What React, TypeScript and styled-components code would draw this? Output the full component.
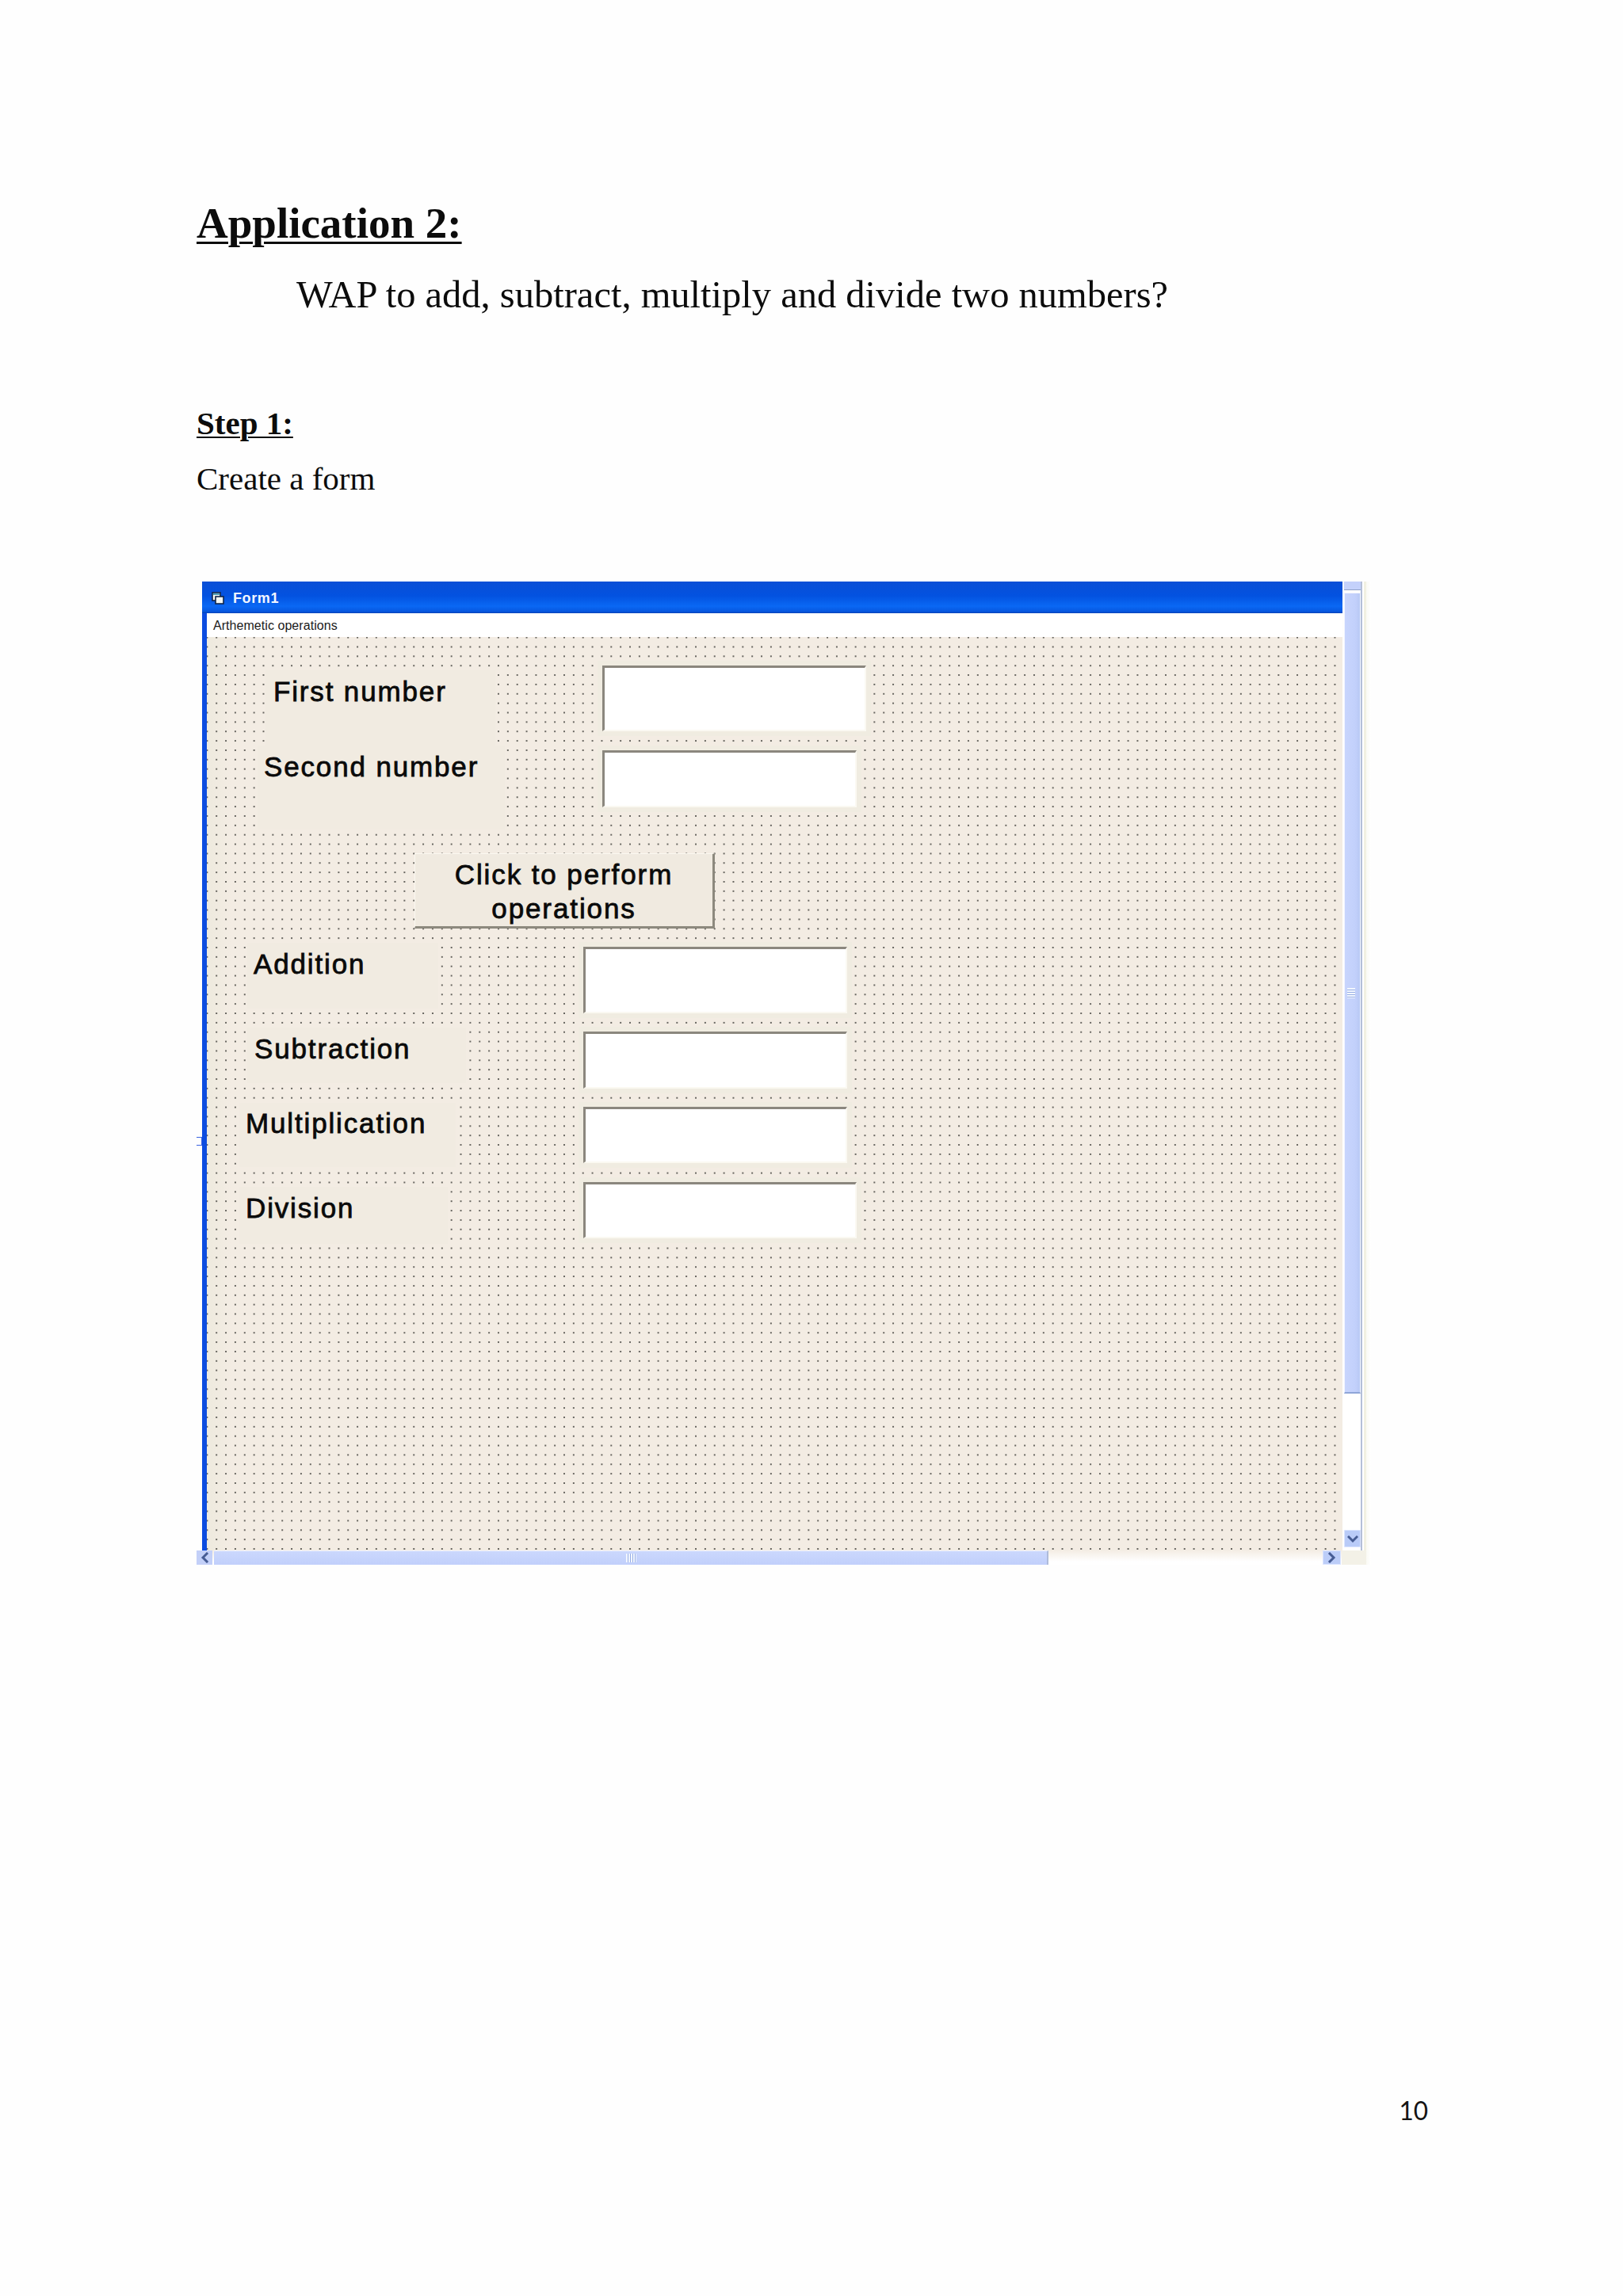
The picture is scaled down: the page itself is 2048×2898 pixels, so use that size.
import React from "react";
import styled, { createGlobalStyle } from "styled-components";

const Global = createGlobalStyle`
  html, body { margin: 0; padding: 0; background: #fff; }
`;

const Page = styled.div`
  position: relative;
  box-sizing: border-box;
  width: 2048px;
  height: 2898px;
  padding: 251px 0 0 248px;
  display: flex;
  flex-direction: column;
  background: #fefefe;
  color: #0c0c0c;
  font-family: "Liberation Serif", serif;
`;

const Title = styled.div`
  font-size: 55px;
  line-height: 62px;
  font-weight: 700;
  white-space: nowrap;
  text-decoration: underline;
  text-decoration-thickness: 3px;
  text-underline-offset: 5px;
`;

const Question = styled.div`
  margin: 31px 0 0 126px;
  font-size: 48.5px;
  line-height: 56px;
  white-space: nowrap;
`;

const StepHeading = styled.div`
  margin-top: 110px;
  font-size: 41px;
  line-height: 48px;
  font-weight: 700;
  white-space: nowrap;
  text-decoration: underline;
  text-decoration-thickness: 2px;
  text-underline-offset: 3px;
`;

const StepText = styled.div`
  margin-top: 22px;
  font-size: 41px;
  line-height: 48px;
  white-space: nowrap;
`;

const Frame = styled.div`
  margin-top: 106px;
  width: 1482px;
  height: 1241px;
  display: grid;
  grid-template-columns: 1448px 34px;
  grid-template-rows: 1223px 18px;
  font-family: "Liberation Sans", Arial, sans-serif;
`;

const Window = styled.div`
  position: relative;
  margin: 0 2px 0 7px;
  display: flex;
  flex-direction: column;
  min-height: 0;
`;

const Ruler = styled.div`
  position: absolute;
  left: -7px;
  top: 701px;
  width: 6px;
  height: 9px;
  border: 1px solid #3a62e0;
  border-left: 0;
`;

const TitleBar = styled.div`
  height: 40px;
  flex: none;
  box-sizing: border-box;
  padding: 2px 0 0 12px;
  display: flex;
  align-items: center;
  gap: 11px;
  background: linear-gradient(180deg, #0a4fd6 0%, #0352e0 45%, #0a68f4 78%, #0758e0 94%, #0342b8 100%);
`;

const FormIcon = styled.svg`
  width: 16px;
  height: 16px;
  flex: none;
`;

const TitleText = styled.span`
  color: #f2f6ff;
  font-size: 18px;
  font-weight: 700;
  line-height: 20px;
  letter-spacing: 0.6px;
`;

const Body = styled.div`
  flex: 1;
  display: flex;
  flex-direction: column;
  min-height: 0;
  border-left: 6px solid #0c4ce0;
`;

const MenuBar = styled.div`
  height: 30px;
  flex: none;
  box-sizing: border-box;
  padding: 6px 0 0 8px;
  background: #fff;
  color: #1a1a1a;
  font-size: 16px;
  line-height: 20px;
  letter-spacing: 0.05px;
`;

const Canvas = styled.div`
  position: relative;
  flex: 1;
  background-color: #f3ece3;
  background-image:
    radial-gradient(circle at center, #2a2a26 0, #2a2a26 0.5px, rgba(42, 42, 38, 0) 1.15px),
    linear-gradient(90deg, #eeeade 0, #f3ece3 30px, #f3ece3 100%);
  background-size: 11.87px 11.86px, 100% 100%;
  background-position: -5.6px -5.3px, 0 0;
  background-repeat: repeat, no-repeat;
`;

const Label = styled.div<{ $x: number; $y: number; $w: number; $h: number; $pl: number; $pt: number }>`
  position: absolute;
  left: ${(p) => p.$x}px;
  top: ${(p) => p.$y}px;
  width: ${(p) => p.$w}px;
  height: ${(p) => p.$h}px;
  box-sizing: border-box;
  padding: ${(p) => p.$pt}px 0 0 ${(p) => p.$pl}px;
  background: #f1ebe1;
  color: #0a0a0a;
  font-size: 35px;
  line-height: 34px;
  letter-spacing: 1.85px;
  white-space: nowrap;
  -webkit-text-stroke: 0.8px #0a0a0a;
`;

const TextBox = styled.div<{ $x: number; $y: number; $w: number; $h: number }>`
  position: absolute;
  left: ${(p) => p.$x}px;
  top: ${(p) => p.$y}px;
  width: ${(p) => p.$w}px;
  height: ${(p) => p.$h}px;
  box-sizing: border-box;
  background: #fff;
  border-style: solid;
  border-width: 3px 2px 2px 3px;
  border-color: #8b877e #fbf9f2 #fbf9f2 #8b877e;
  box-shadow: 0 0 0 6px #f0ece1;
`;

const PerformButton = styled.div`
  position: absolute;
  left: 262px;
  top: 273px;
  width: 379px;
  height: 95px;
  box-sizing: border-box;
  padding-top: 4px;
  background: #f0eae0;
  border-style: solid;
  border-width: 1px 3px 3px 1px;
  border-color: #fbf8f0 #8d897e #8d897e #fbf8f0;
  color: #0a0a0a;
  text-align: center;
  font-size: 35px;
  line-height: 43px;
  letter-spacing: 1.9px;
  -webkit-text-stroke: 0.8px #0a0a0a;
`;

const VerticalBar = styled.div`
  display: flex;
  min-height: 0;
  background: linear-gradient(90deg, #fff 0, #fff 25px, #f1f0e2 25px, #f1f0e2 28px, #fafaf4 28px, #fff 34px);
`;

const VerticalTrack = styled.div`
  width: 21px;
  display: flex;
  flex-direction: column;
  align-items: stretch;
  border-right: 2px solid #b4bfd8;
`;

const TopCap = styled.div`
  height: 10px;
  flex: none;
  background: #c4d1fb;
  border-bottom: 1px solid #8fa0c8;
`;

const VerticalThumb = styled.div`
  position: relative;
  margin-top: 3px;
  height: 1011px;
  flex: none;
  box-sizing: border-box;
  border: 1px solid #f2f5ff;
  border-bottom: 2px solid #8fa6d8;
  background: linear-gradient(90deg, #c8d5fd 0, #c2d0fb 70%, #b8c8f4 100%);
`;

const VerticalGrip = styled.div`
  position: absolute;
  left: 3px;
  top: 498px;
  width: 10px;
  height: 13px;
  background: repeating-linear-gradient(180deg, #f2f6ff 0, #f2f6ff 2px, #97aee4 2px, #97aee4 3px);
`;

const Spring = styled.div`
  flex: 1;
`;

const DownButton = styled.div`
  margin-bottom: 4px;
  height: 22px;
  flex: none;
  display: flex;
  align-items: center;
  justify-content: center;
  border-radius: 2px;
  background: #b9cbf8;
  box-shadow: inset 0 0 0 1px #dbe5ff;
`;

const HorizontalBar = styled.div`
  display: flex;
  background: linear-gradient(180deg, #f4ede4 0, #fff 14px);
`;

const LeftButton = styled.div`
  width: 20px;
  margin-right: 2px;
  flex: none;
  display: flex;
  align-items: center;
  justify-content: center;
  background: #c3d0f8;
`;

const HorizontalThumb = styled.div`
  position: relative;
  width: 1053px;
  flex: none;
  box-sizing: border-box;
  border-top: 1px solid #eef2ff;
  border-right: 2px solid #aebbda;
  background: linear-gradient(180deg, #cbd8fd 0, #c1cffb 100%);
`;

const HorizontalGrip = styled.div`
  position: absolute;
  left: 520px;
  top: 3px;
  width: 13px;
  height: 11px;
  background: repeating-linear-gradient(90deg, #f2f6ff 0, #f2f6ff 2px, #97aee4 2px, #97aee4 3px);
`;

const RightButton = styled.div`
  margin-left: 346px;
  width: 23px;
  flex: none;
  display: flex;
  align-items: center;
  justify-content: center;
  background: #bccdf8;
  box-shadow: inset 0 0 0 1px #dbe5ff;
`;

const RestCorner = styled.div`
  flex: 1;
  margin-left: 1px;
  background: #f3f1e7;
`;

const Corner = styled.div`
  background: linear-gradient(90deg, #f3f1e7 0, #f3f1e7 28px, #fafaf4 28px, #fff 34px);
`;

const PageNumber = styled.div`
  position: absolute;
  right: 246px;
  top: 2645px;
  font-family: Lato, "Liberation Sans", sans-serif;
  font-size: 31.5px;
  line-height: 36px;
  color: #141414;
  transform: scaleY(1.06);
`;

const Chevron: React.FC<{ d: string; w: number; h: number }> = ({ d, w, h }) => (
  <svg width={w} height={h} viewBox={`0 0 ${w} ${h}`} fill="none">
    <path d={d} stroke="#465c94" strokeWidth="3" strokeLinecap="square" />
  </svg>
);

const labels = [
  { text: "First number", x: 74, y: 42, w: 290, h: 95, pl: 10, pt: 10 },
  { text: "Second number", x: 64, y: 137, w: 312, h: 106, pl: 8, pt: 10 },
  { text: "Addition", x: 51, y: 386, w: 241, h: 83, pl: 8, pt: 10 },
  { text: "Subtraction", x: 51, y: 493, w: 276, h: 70, pl: 9, pt: 10 },
  { text: "Multiplication", x: 41, y: 588, w: 273, h: 81, pl: 8, pt: 9 },
  { text: "Division", x: 41, y: 694, w: 263, h: 72, pl: 8, pt: 10 },
];

const boxes = [
  { x: 499, y: 36, w: 333, h: 83 },
  { x: 499, y: 143, w: 321, h: 72 },
  { x: 475, y: 391, w: 333, h: 84 },
  { x: 475, y: 498, w: 333, h: 72 },
  { x: 475, y: 593, w: 333, h: 71 },
  { x: 475, y: 688, w: 345, h: 71 },
];

export default function App() {
  return (
    <Page>
      <Global />
      <Title>Application 2:</Title>
      <Question>WAP to add, subtract, multiply and divide two numbers?</Question>
      <StepHeading>Step 1:</StepHeading>
      <StepText>Create a form</StepText>
      <Frame>
        <Window>
          <Ruler />
          <TitleBar>
            <FormIcon viewBox="0 0 16 16">
              <rect x="1" y="1" width="10" height="10" fill="#f4f8f4" stroke="#10254a" strokeWidth="1.6" />
              <rect x="2" y="2" width="8" height="2" fill="#4fa0b8" />
              <rect x="5" y="6" width="10" height="9" fill="#f4f8f4" stroke="#10254a" strokeWidth="1.6" />
            </FormIcon>
            <TitleText>Form1</TitleText>
          </TitleBar>
          <Body>
            <MenuBar>Arthemetic operations</MenuBar>
            <Canvas>
              {labels.map((l) => (
                <Label key={l.text} $x={l.x} $y={l.y} $w={l.w} $h={l.h} $pl={l.pl} $pt={l.pt}>
                  {l.text}
                </Label>
              ))}
              {boxes.map((b) => (
                <TextBox key={b.y} $x={b.x} $y={b.y} $w={b.w} $h={b.h} />
              ))}
              <PerformButton>
                Click to perform
                <br />
                operations
              </PerformButton>
            </Canvas>
          </Body>
        </Window>
        <VerticalBar>
          <VerticalTrack>
            <TopCap />
            <VerticalThumb>
              <VerticalGrip />
            </VerticalThumb>
            <Spring />
            <DownButton>
              <Chevron d="M2 3 L7 8 L12 3" w={14} h={11} />
            </DownButton>
          </VerticalTrack>
        </VerticalBar>
        <HorizontalBar>
          <LeftButton>
            <Chevron d="M8 2 L3 7 L8 12" w={11} h={14} />
          </LeftButton>
          <HorizontalThumb>
            <HorizontalGrip />
          </HorizontalThumb>
          <RightButton>
            <Chevron d="M3 2 L8 7 L3 12" w={11} h={14} />
          </RightButton>
          <RestCorner />
        </HorizontalBar>
        <Corner />
      </Frame>
      <PageNumber>10</PageNumber>
    </Page>
  );
}
